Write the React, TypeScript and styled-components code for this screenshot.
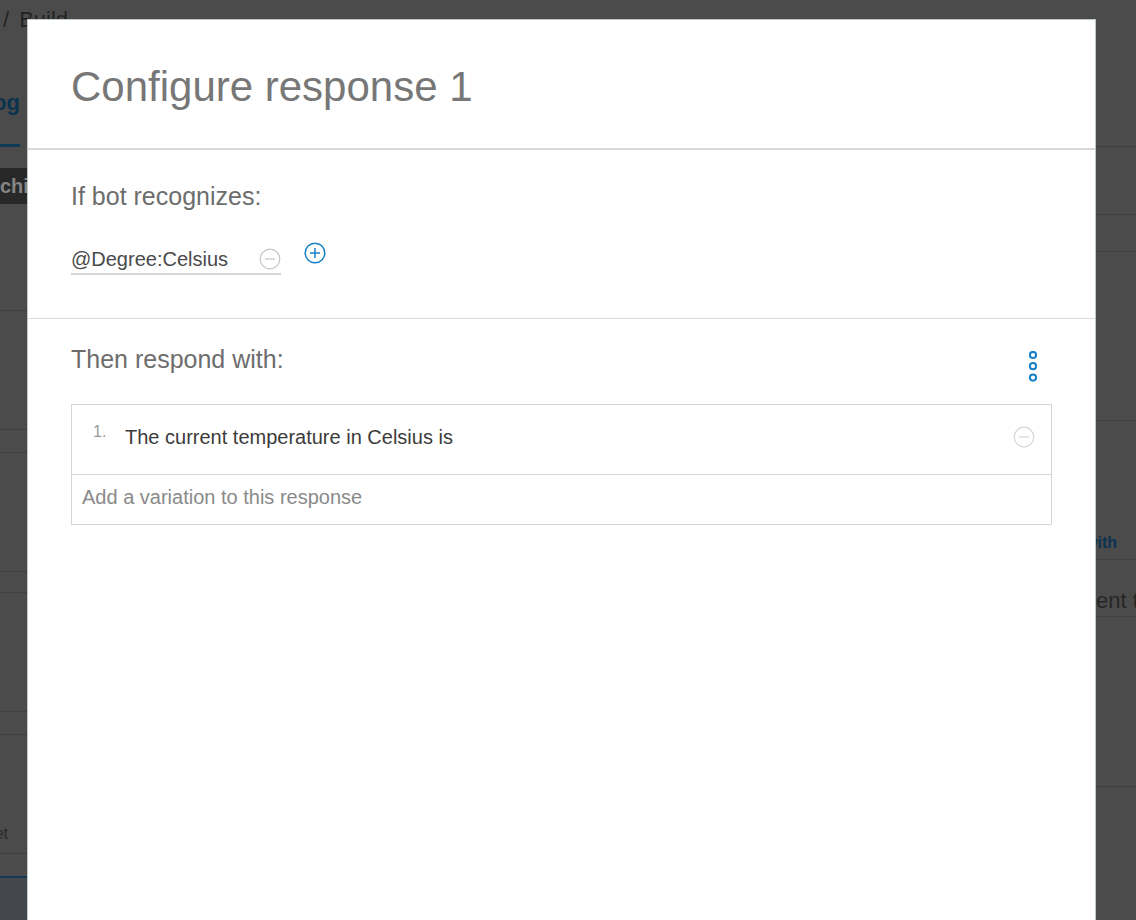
import React from "react";
import styled, { createGlobalStyle } from "styled-components";

const GlobalStyle = createGlobalStyle`
  html, body { margin: 0; padding: 0; }
  body {
    font-family: "Liberation Sans", Arial, Helvetica, sans-serif;
    background: #4b4b4b;
    overflow: hidden;
  }
  * { box-sizing: border-box; }
`;

/* ---------- background page (dimmed) ---------- */

const Page = styled.div`
  position: relative;
  width: 1136px;
  height: 920px;
  overflow: hidden;
  display: flex;
  flex-direction: column;
  background: #4b4b4b;
`;

const Breadcrumb = styled.div`
  height: 40px;
  padding: 7px 0 0 3px;
  font-size: 22px;
  line-height: 26px;
  color: #232323;
  white-space: nowrap;
  display: flex;
  gap: 10px;
`;

const Body = styled.div`
  flex: 1;
  display: flex;
  min-height: 0;
`;

const LeftPane = styled.div`
  width: 27px;
  overflow: hidden;
  display: flex;
  flex-direction: column;
`;

const Spacer = styled.div`
  flex: 1;
`;

const RightPane = styled.div`
  width: 41px;
  overflow: hidden;
  display: flex;
  flex-direction: column;
`;

const TabLabel = styled.div`
  width: 20px;
  height: 107px;
  padding-top: 52px;
  border-bottom: 3px solid #113a57;
  display: flex;
  justify-content: flex-end;
  font-size: 22px;
  font-weight: bold;
  line-height: 22px;
  color: #0b3350;
  white-space: nowrap;
`;

const DarkBand = styled.div`
  margin-top: 21px;
  height: 36px;
  background: #282828;
  color: #858585;
  font-size: 20px;
  font-weight: bold;
  line-height: 36px;
  white-space: nowrap;
`;

const PaneRow = styled.div<{ $h: number; $line?: string }>`
  flex: none;
  height: ${(p) => p.$h + 1}px;
  border-bottom: 1px solid ${(p) => p.$line ?? "#3f3f3f"};
  display: flex;
  flex-direction: column;
  justify-content: flex-end;
  white-space: nowrap;
`;

const LeftFooter = styled.div`
  flex: 1;
  border-top: 2px solid #163a56;
  background: #44484c;
`;

const FaintText = styled.div<{ $size: number; $color: string; $bold?: boolean; $shift: number; $pb: number }>`
  font-size: ${(p) => p.$size}px;
  line-height: ${(p) => p.$size}px;
  color: ${(p) => p.$color};
  font-weight: ${(p) => (p.$bold ? "bold" : "normal")};
  margin-left: ${(p) => p.$shift}px;
  padding-bottom: ${(p) => p.$pb}px;
`;

const RightAligned = styled.div`
  display: flex;
  justify-content: flex-end;
  width: 8px;
  font-size: 16px;
  line-height: 16px;
  color: #2a2a2a;
  padding-bottom: 11px;
`;

/* ---------- modal ---------- */

const Modal = styled.div`
  position: absolute;
  left: 27px;
  top: 19px;
  width: 1069px;
  bottom: -10px;
  background: #ffffff;
  border: 1px solid #bfc8c8;
  border-bottom: none;
  display: flex;
  flex-direction: column;
`;

const ModalHeader = styled.header`
  height: 130px;
  padding: 46px 43px 0;
  border-bottom: 2px solid #d9d9d9;
`;

const Title = styled.h1`
  margin: 0;
  font-size: 42px;
  line-height: 42px;
  font-weight: normal;
  color: #777777;
`;

const Section = styled.section<{ $pt: number; $pb: number; $border?: boolean }>`
  padding: ${(p) => p.$pt}px 43px ${(p) => p.$pb}px;
  border-bottom: ${(p) => (p.$border ? "1px solid #dcdcdc" : "none")};
`;

const SectionHeading = styled.h2`
  margin: 0;
  font-size: 25px;
  line-height: 25px;
  font-weight: normal;
  color: #6d6d6d;
`;

const ConditionRow = styled.div`
  margin-top: 32px;
  display: flex;
  align-items: flex-start;
  gap: 23px;
`;

const ConditionField = styled.div`
  width: 210px;
  height: 34px;
  border-bottom: 2px solid #d5d5d5;
  display: flex;
  align-items: center;
  justify-content: space-between;
  padding-top: 3px;
`;

const ConditionText = styled.span`
  font-size: 20px;
  line-height: 24px;
  color: #4a4a4a;
`;

const IconButton = styled.button<{ $mt?: number }>`
  appearance: none;
  border: none;
  background: none;
  padding: 0;
  margin: ${(p) => p.$mt ?? 0}px 0 0;
  display: flex;
  align-items: center;
  justify-content: center;
  cursor: pointer;
`;

const HeadingRow = styled.div`
  display: flex;
  justify-content: space-between;
  align-items: flex-start;
`;

const KebabButton = styled(IconButton)`
  margin: 4px 13px 0 0;
`;

const ResponseTable = styled.div`
  margin-top: 22px;
  border: 1px solid #d6d6d6;
`;

const ResponseRow = styled.div`
  height: 70px;
  border-bottom: 1px solid #d6d6d6;
  display: flex;
  align-items: center;
  padding: 0 16px 5px 21px;
`;

const ItemNumber = styled.span`
  align-self: flex-start;
  margin-top: 19px;
  width: 32px;
  flex: none;
  font-size: 16px;
  line-height: 16px;
  color: #9a9a9a;
`;

const ItemText = styled.span`
  flex: 1;
  font-size: 20px;
  line-height: 24px;
  color: #3b3b3b;
`;

const AddRow = styled.div`
  height: 49px;
  padding: 10px 10px 0;
  font-size: 20px;
  line-height: 24px;
  color: #8a8a8a;
`;

/* ---------- icons ---------- */

const CircleIcon: React.FC<{ kind: "plus" | "minus"; color: string; width?: number }> = ({
  kind,
  color,
  width = 1.2,
}) => (
  <svg width="22" height="22" viewBox="0 0 22 22" fill="none">
    <circle cx="11" cy="11" r="9.8" stroke={color} strokeWidth={width} />
    <line x1="6" y1="11" x2="16" y2="11" stroke={color} strokeWidth={width} />
    {kind === "plus" && <line x1="11" y1="6" x2="11" y2="16" stroke={color} strokeWidth={width} />}
  </svg>
);

const KebabIcon: React.FC = () => (
  <svg width="12" height="31" viewBox="0 0 12 31" fill="none">
    <circle cx="6" cy="4" r="3.1" stroke="#1680c6" strokeWidth="2" />
    <circle cx="6" cy="15.2" r="3.1" stroke="#1680c6" strokeWidth="2" />
    <circle cx="6" cy="26.6" r="3.1" stroke="#1680c6" strokeWidth="2" />
  </svg>
);

export default function App() {
  return (
    <>
      <GlobalStyle />
      <Page>
        <Breadcrumb>
          <span>/</span>
          <span>Build</span>
        </Breadcrumb>
        <Body>
          <LeftPane>
            <TabLabel>Dialog</TabLabel>
            <DarkBand>chil</DarkBand>
            <PaneRow $h={106} />
            <PaneRow $h={118} />
            <PaneRow $h={22} />
            <PaneRow $h={118} />
            <PaneRow $h={20} />
            <PaneRow $h={118} />
            <PaneRow $h={22} />
            <PaneRow $h={118}>
              <RightAligned>Set</RightAligned>
            </PaneRow>
            <PaneRow $h={21} $line="transparent" />
            <LeftFooter />
          </LeftPane>
          <Spacer />
          <RightPane>
            <PaneRow $h={106} />
            <PaneRow $h={67} />
            <PaneRow $h={36} />
            <PaneRow $h={168} />
            <PaneRow $h={138}>
              <FaintText $size={16} $color="#0b3350" $bold $shift={-10} $pb={8}>
                with
              </FaintText>
            </PaneRow>
            <PaneRow $h={56}>
              <FaintText $size={22} $color="#272727" $shift={1} $pb={4}>
                ent temperature
              </FaintText>
            </PaneRow>
            <PaneRow $h={169} />
          </RightPane>
        </Body>

        <Modal role="dialog" aria-label="Configure response 1">
          <ModalHeader>
            <Title>Configure response 1</Title>
          </ModalHeader>

          <Section $pt={34} $pb={43} $border>
            <SectionHeading>If bot recognizes:</SectionHeading>
            <ConditionRow>
              <ConditionField>
                <ConditionText>@Degree:Celsius</ConditionText>
                <IconButton aria-label="Remove condition">
                  <CircleIcon kind="minus" color="#c4c4c4" />
                </IconButton>
              </ConditionField>
              <IconButton aria-label="Add condition" $mt={1}>
                <CircleIcon kind="plus" color="#1680c6" width={1.5} />
              </IconButton>
            </ConditionRow>
          </Section>

          <Section $pt={28} $pb={0}>
            <HeadingRow>
              <SectionHeading>Then respond with:</SectionHeading>
              <KebabButton aria-label="More options">
                <KebabIcon />
              </KebabButton>
            </HeadingRow>
            <ResponseTable>
              <ResponseRow>
                <ItemNumber>1.</ItemNumber>
                <ItemText>The current temperature in Celsius is</ItemText>
                <IconButton aria-label="Remove response">
                  <CircleIcon kind="minus" color="#d4d4d4" />
                </IconButton>
              </ResponseRow>
              <AddRow>Add a variation to this response</AddRow>
            </ResponseTable>
          </Section>
        </Modal>
      </Page>
    </>
  );
}
